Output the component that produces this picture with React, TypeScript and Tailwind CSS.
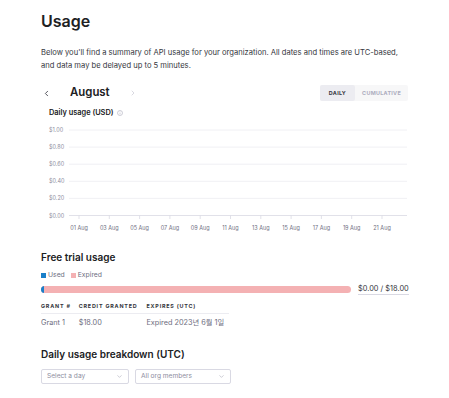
import { ChevronLeft, ChevronRight, ChevronDown } from 'lucide-react';

const yTicks = ['$1.00', '$0.80', '$0.60', '$0.40', '$0.20', '$0.00'];
const xTicks = ['01 Aug', '03 Aug', '05 Aug', '07 Aug', '09 Aug', '11 Aug', '13 Aug', '15 Aug', '17 Aug', '19 Aug', '21 Aug'];

function UsageChart() {
  // svg sits at page x=41, just under the chart title
  return (
    <svg width="369" height="114" className="block">
      {yTicks.map((t, i) => {
        const y = 11 + i * 17.1;
        return (
          <g key={t}>
            <text x="8" y={y + 2} fontSize="5.5" fill="#8e8ea0" fontFamily="Inter, sans-serif">{t}</text>
            <line x1="28" x2="366" y1={y} y2={y} stroke={i === 5 ? '#d9d9e3' : '#ececf1'} strokeWidth="0.8" />
          </g>
        );
      })}
      {xTicks.map((t, i) => {
        const x = 38 + i * 30.3;
        return (
          <g key={t}>
            <line x1={x} x2={x} y1="96.5" y2="100" stroke="#d9d9e3" strokeWidth="0.8" />
            <text x={x} y="111" fontSize="5.5" fill="#6e6e80" textAnchor="middle" fontFamily="Inter, sans-serif">{t}</text>
          </g>
        );
      })}
    </svg>
  );
}

export default function App() {
  return (
    <div className="w-[449px] h-[398px] bg-white overflow-hidden text-[#202123]" style={{ fontFamily: 'Inter, "Noto Sans CJK KR", sans-serif' }}>
      <div className="pl-[41px] pr-[39px] pt-[11px]">
        <h1 className="text-[16px] leading-[20px] font-semibold">Usage</h1>

        <p className="mt-[15px] text-[7.6px] leading-[13px] text-[#353740]">
          Below you'll find a summary of API usage for your organization. All dates and times are UTC-based, and data may be delayed up to 5 minutes.
        </p>

        {/* month selector + toggle */}
        <div className="mt-[13px] flex items-center justify-between h-[16px]">
          <div className="flex items-center">
            <ChevronLeft className="w-[9px] h-[9px] ml-[1px] text-[#353740]" strokeWidth={2.2} />
            <span className="ml-[19px] text-[11.4px] font-semibold">August</span>
            <ChevronRight className="w-[8px] h-[8px] ml-[19px] text-[#c5c5d2]" strokeWidth={2} />
          </div>
          <div className="flex h-[16px] mr-[2px] rounded-[2px] bg-[#f7f7f8] text-[5.4px] font-bold tracking-[0.3px]">
            <div className="px-[9px] flex items-center bg-[#ececf1] rounded-[2px] text-[#353740]">DAILY</div>
            <div className="px-[7px] flex items-center text-[#acacbe]">CUMULATIVE</div>
          </div>
        </div>

        {/* chart */}
        <div className="mt-[6px]">
          <div className="ml-[8px] flex items-center gap-[3px] h-[12px]">
            <span className="text-[7.4px] font-semibold">Daily usage (USD)</span>
            <svg width="6" height="6" viewBox="0 0 12 12" className="text-[#acacbe]">
              <circle cx="6" cy="6" r="5" fill="none" stroke="currentColor" strokeWidth="1.2" />
              <line x1="6" y1="5.2" x2="6" y2="8.6" stroke="currentColor" strokeWidth="1.2" />
              <circle cx="6" cy="3.5" r="0.7" fill="currentColor" />
            </svg>
          </div>
          <UsageChart />
        </div>

        {/* free trial */}
        <h2 className="mt-[17px] text-[10px] leading-[14px] font-semibold">Free trial usage</h2>
        <div className="mt-[7px] h-[9px] flex items-center gap-[6px] text-[6.8px] text-[#6e6e80]">
          <span className="flex items-center gap-[2px]"><span className="w-[5px] h-[5px] bg-[#1a7fc9]" />Used</span>
          <span className="flex items-center gap-[2px]"><span className="w-[5px] h-[5px] bg-[#f4b1b3]" />Expired</span>
        </div>
        <div className="mt-[4px] h-[10px] flex items-center">
          <div className="w-[310px] h-[7px] rounded-full bg-[#f4b1b3] overflow-hidden flex">
            <div className="w-[3px] h-full bg-[#1a7fc9]" />
          </div>
          <span className="ml-[7px] text-[7.4px] leading-[10px] text-[#353740] border-b border-[#d9d9e3]">$0.00 / $18.00</span>
        </div>

        {/* grants table */}
        <table className="mt-[5px] border-collapse">
          <thead>
            <tr className="border-b border-[#ececf1] text-[5.4px] font-bold tracking-[0.8px] text-[#353740]">
              <th className="text-left font-bold pr-[8px] h-[14px]">GRANT #</th>
              <th className="text-left font-bold pr-[9px]">CREDIT GRANTED</th>
              <th className="text-left font-bold pr-[33px]">EXPIRES (UTC)</th>
            </tr>
          </thead>
          <tbody>
            <tr className="text-[7.3px] text-[#6e6e80]">
              <td className="h-[19px] pt-[1px]">Grant 1</td>
              <td className="pt-[1px]">$18.00</td>
              <td className="pt-[1px]">Expired 2023년 6월 1일</td>
            </tr>
          </tbody>
        </table>

        {/* breakdown */}
        <h2 className="mt-[15px] text-[10px] leading-[14px] font-semibold">Daily usage breakdown (UTC)</h2>
        <div className="mt-[8px] flex gap-[6px]">
          <div className="w-[88px] h-[15px] border border-[#d9d9e3] rounded-[2px] flex items-center justify-between px-[5px] text-[6.6px] text-[#8e8ea0]">
            <span>Select a day</span>
            <ChevronDown className="w-[7px] h-[7px] text-[#8e8ea0]" strokeWidth={1.5} />
          </div>
          <div className="w-[96px] h-[15px] border border-[#d9d9e3] rounded-[2px] flex items-center justify-between px-[5px] text-[6.6px] text-[#8e8ea0]">
            <span>All org members</span>
            <ChevronDown className="w-[7px] h-[7px] text-[#8e8ea0]" strokeWidth={1.5} />
          </div>
        </div>
      </div>
    </div>
  );
}
